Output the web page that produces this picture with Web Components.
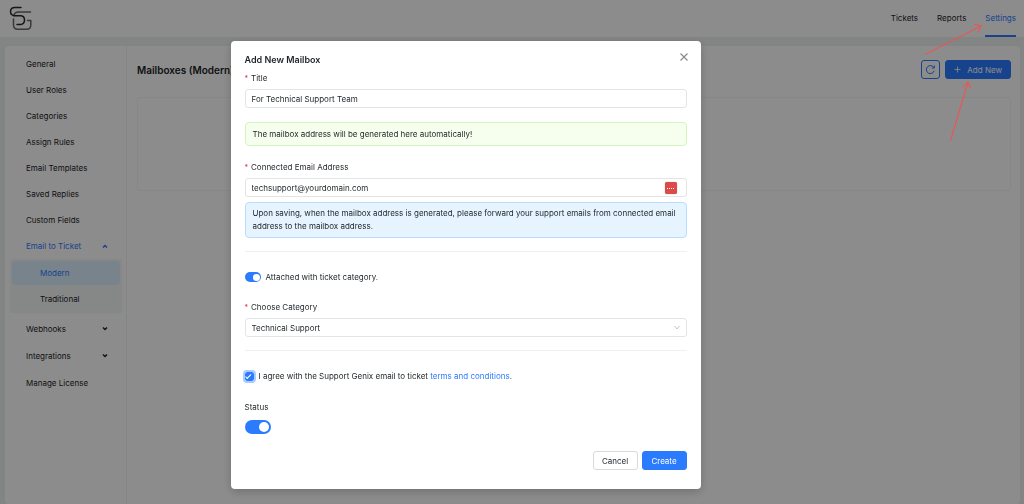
<!DOCTYPE html>
<html lang="en">
<head>
<meta charset="utf-8">
<meta name="viewport" content="width=device-width, initial-scale=1">
<title>Mailboxes</title>
<style>
html, body { margin: 0; min-height: 100%; }
body {
  --blue: #2b7bff;
  --ink: #1d2327;
  --line: #e4e4e4;
  background: #eff0f0;
  color: var(--ink);
  font: 8px/12px Inter, "Liberation Sans", sans-serif;
  overflow: hidden;
}
</style>
</head>
<body>
<sg-app></sg-app>
<script>
const define = (name, html, setup) => {
  const template = document.createElement('template');
  template.innerHTML = '<style>*{box-sizing:border-box}button,input,select{font:inherit;color:inherit;margin:0}</style>' + html;
  customElements.define(name, class extends HTMLElement {
    constructor() {
      super();
      this.attachShadow({ mode: 'open' }).append(template.content.cloneNode(true));
    }
    connectedCallback() {
      if (setup) setup(this, this.shadowRoot);
    }
  });
};

define('sg-header', `
<style>
:host { display: flex; justify-content: space-between; height: 37px; padding: 0 8px 0 9px; background: #fff; }
svg { margin-top: 5px; fill: none; stroke-linecap: round; stroke-linejoin: round; }
nav { display: flex; gap: 19px; }
a { display: flex; align-items: center; height: 37px; color: inherit; text-decoration: none; border-bottom: 2px solid transparent; }
a[aria-current] { color: var(--blue); border-color: var(--blue); }
</style>
<svg width="24" height="26" viewBox="0 0 24 26" aria-label="Support Genix" role="img">
  <path d="M21.500 7H10Q5 7 5 11M4.500 14V20Q4.500 24.300 9 24.300H17.500Q21.800 24.300 21.800 20V15.500H18.500" stroke="#686868" stroke-width="1.500"/>
  <path d="M12 2.500H6Q1.500 2.500 1.500 6.500T6 10.700H11.500Q15.500 10.700 15.500 15T11.500 19.500H8" stroke="#2b2b2b" stroke-width="1.500"/>
</svg>
<nav><a href="#tickets">Tickets</a><a href="#reports">Reports</a><a href="#settings" aria-current="page">Settings</a></nav>
`);

define('sg-nav-item', `
<style>
:host { display: block; }
a { display: flex; align-items: center; justify-content: space-between; height: 26px; padding: 0 17px 0 21px; color: inherit; text-decoration: none; }
svg { display: none; fill: none; stroke: currentColor; stroke-width: 1.500; }
:host([open]) svg, :host([closed]) svg { display: block; }
:host([open]) svg { transform: rotate(180deg); }
:host([open]) a, :host([active]) a { color: var(--blue); }
:host([child]) a { height: 24px; margin: 0 7px; padding: 0 28px; border-radius: 4px; }
:host([active]) a { background: #dcefff; }
</style>
<a href="#"><slot></slot><svg width="8" height="6" viewBox="0 0 8 6"><path d="M2 1.500L4 3.500L6 1.500"/></svg></a>
`);

define('sg-sidebar', `
<style>
:host { display: block; width: 122px; flex: none; padding-top: 5px; border-right: 1px solid #f3f3f3; }
.sub { display: grid; gap: 2px; margin: 0 0 3px 5px; padding: 2px 0; background: #f4f7f7; width: 112px; }
.sub sg-nav-item { margin: 0 -5px; }
.more { display: grid; gap: 1px; }
</style>
<nav>
<sg-nav-item>General</sg-nav-item>
<sg-nav-item>User Roles</sg-nav-item>
<sg-nav-item>Categories</sg-nav-item>
<sg-nav-item>Assign Rules</sg-nav-item>
<sg-nav-item>Email Templates</sg-nav-item>
<sg-nav-item>Saved Replies</sg-nav-item>
<sg-nav-item>Custom Fields</sg-nav-item>
<sg-nav-item open>Email to Ticket</sg-nav-item>
<div class="sub"><sg-nav-item child active>Modern</sg-nav-item><sg-nav-item child>Traditional</sg-nav-item></div>
<div class="more">
<sg-nav-item closed>Webhooks</sg-nav-item>
<sg-nav-item closed>Integrations</sg-nav-item>
<sg-nav-item>Manage License</sg-nav-item>
</div>
</nav>
`);

define('sg-button', `
<style>
:host { display: block; }
button { display: flex; align-items: center; justify-content: center; gap: 6px; height: 19px; padding: 0 8px; border: 1px solid #d9d9d9; border-radius: 3px; background: #fff; white-space: nowrap; }
:host([primary]) button { background: var(--blue); border-color: var(--blue); color: #fff; }
:host([wide]) button { min-width: 45px; }
:host([icon]) button { width: 19px; padding: 0; border-color: var(--blue); color: var(--blue); }
</style>
<button type="button"><slot></slot></button>
`, (host, root) => {
  const label = host.getAttribute('label');
  if (label) root.querySelector('button').setAttribute('aria-label', label);
});

define('sg-mailboxes', `
<style>
:host { display: block; flex: 1; padding: 14px 9px 0 10px; }
header { display: flex; align-items: center; justify-content: space-between; height: 19px; }
h1 { margin: 0; font-size: 10px; line-height: 16px; font-weight: 600; }
.actions { display: flex; gap: 5px; }
.card { height: 94px; margin-top: 18px; border: 1px solid #f5f5f5; border-radius: 4px; }
svg { fill: none; stroke: currentColor; }
</style>
<header>
  <h1>Mailboxes (Modern)</h1>
  <div class="actions">
    <sg-button icon label="Refresh"><svg width="11" height="11" viewBox="0 0 11 11"><path d="M8.800 3.500A4 4 0 1 0 9.200 6.800M9.300 1.500V4H6.800" stroke-width="1"/></svg></sg-button>
    <sg-button primary><svg width="7" height="7" viewBox="0 0 7 7"><path d="M3.500 0.500V6.500M0.500 3.500H6.500" stroke-width="0.800"/></svg>Add New</sg-button>
  </div>
</header>
<div class="card"></div>
`);

define('sg-field', `
<style>
:host { display: block; }
label { display: block; height: 12px; margin-bottom: 5px; }
:host([required]) label::before { content: "*"; font-size: 7px; color: #d9363e; margin-right: 3px; }
.box { position: relative; }
input, select { display: block; width: 100%; height: 19px; padding: 0 6px; border: 1px solid var(--line); border-radius: 3px; background: #fff; appearance: none; outline: none; }
svg { position: absolute; right: 6px; top: 7px; fill: none; stroke: #c4c4c4; pointer-events: none; }
::slotted(*) { position: absolute; right: 10px; top: 4px; }
</style>
<label for="control"></label>
<div class="box"><slot></slot></div>
`, (host, root) => {
  root.querySelector('label').textContent = host.getAttribute('label');
  const isSelect = host.hasAttribute('select');
  const control = document.createElement(isSelect ? 'select' : 'input');
  control.id = 'control';
  if (isSelect) {
    control.add(new Option(host.getAttribute('value')));
  } else {
    control.type = host.getAttribute('type') || 'text';
    control.value = host.getAttribute('value');
  }
  root.querySelector('.box').prepend(control);
  if (isSelect) control.insertAdjacentHTML('afterend', '<svg width="8" height="6" viewBox="0 0 8 6"><path d="M1.500 1L4 4L6.500 1"/></svg>');
});

define('sg-fill-badge', `
<style>
:host { display: flex; align-items: center; justify-content: center; gap: 1px; width: 12px; height: 12px; border-radius: 2px; background: #dc4a4a; box-shadow: 0 0 1px #777; }
i { width: 1px; height: 1px; background: #fff; }
</style><i></i><i></i><i></i><i></i>
`);

define('sg-alert', `
<style>
:host { display: block; padding: 5px 7px; line-height: 12px; border: 1px solid #d3f5bd; border-radius: 4px; background: #f6ffed; }
:host([info]) { line-height: 13px; padding: 4px 7px; border-color: #b9dcff; background: #e6f4ff; }
</style><slot></slot>
`);

define('sg-switch', `
<style>
:host { display: block; }
label { display: flex; align-items: center; gap: 5px; }
input { appearance: none; display: grid; align-items: center; justify-items: end; width: 16px; height: 10px; padding: 0 1px; border-radius: 7px; background: var(--blue); }
input::before { content: ""; width: 7px; height: 7px; border-radius: 50%; background: #fff; }
:host([large]) label { flex-direction: column; align-items: flex-start; gap: 7px; }
:host([large]) input { order: 1; width: 26px; height: 14px; padding: 0 2px; }
:host([large]) input::before { width: 10px; height: 10px; }
</style>
<label><input type="checkbox" role="switch" checked><span><slot></slot></span></label>
`);

define('sg-agree', `
<style>
:host { display: flex; align-items: center; gap: 5px; }
input { appearance: none; display: grid; place-items: center; width: 9px; height: 9px; background: var(--blue); border-radius: 2px; outline: 2px solid #a9cdff; }
input::before { content: ""; width: 5px; height: 2px; border: solid #fff; border-width: 0 0 1px 1px; transform: rotate(-45deg) translate(0, -1px); }
a { color: var(--blue); text-decoration: none; }
</style>
<input id="agree" type="checkbox" checked>
<label for="agree">I agree with the Support Genix email to ticket <a href="#terms">terms and conditions</a>.</label>
`);

define('sg-dialog', `
<style>
:host { position: fixed; inset: 0; display: flex; justify-content: center; align-items: flex-start; padding: 41px 93px 0 0; background: rgba(0,0,0,.45); }
section { position: relative; width: 470px; padding: 12px 14px 19px; border-radius: 4px; background: #fff; box-shadow: 0 3px 10px rgba(0,0,0,.2); }
h2 { margin: 0 0 5px; font-size: 9px; line-height: 14px; font-weight: 600; }
.close { position: absolute; top: 10px; right: 11px; display: grid; width: 12px; height: 12px; padding: 1px; border: 0; background: none; color: #888; }
.close svg { fill: none; stroke: currentColor; }
form { display: flex; flex-direction: column; }
.a { margin: 14px 0 15px; }
.b { margin-top: 5px; }
hr { width: 100%; margin: 13px 0 19px; border: 0; border-top: 1px solid #f0f0f0; }
.c { margin: 0 0 18px; }
.d { margin-top: 19px; }
footer { display: flex; justify-content: flex-end; gap: 4px; margin-top: 17px; }
</style>
<section role="dialog" aria-label="Add New Mailbox">
<button class="close" type="button" aria-label="Close"><svg width="10" height="10" viewBox="0 0 10 10"><path d="M1.500 1.500L8.500 8.500M8.500 1.500L1.500 8.500" stroke-width="1.100"/></svg></button>
<h2>Add New Mailbox</h2>
<form>
<sg-field required label="Title" value="For Technical Support Team"></sg-field>
<sg-alert class="a">The mailbox address will be generated here automatically!</sg-alert>
<sg-field required type="email" label="Connected Email Address" value="techsupport@yourdomain.com"><sg-fill-badge></sg-fill-badge></sg-field>
<sg-alert class="b" info>Upon saving, when the mailbox address is generated, please forward your support emails from connected email address to the mailbox address.</sg-alert>
<hr>
<sg-switch class="c">Attached with ticket category.</sg-switch>
<sg-field required select label="Choose Category" value="Technical Support"></sg-field>
<hr>
<sg-agree></sg-agree>
<sg-switch class="d" large>Status</sg-switch>
<footer><sg-button wide>Cancel</sg-button><sg-button wide primary>Create</sg-button></footer>
</form>
</section>
`);

define('sg-arrows', `
<style>
:host { position: absolute; top: 0; right: 0; pointer-events: none; }
svg { display: block; fill: none; stroke: #ff4a4a; stroke-width: 1; stroke-linecap: round; }
</style>
<svg width="124" height="150" viewBox="0 0 124 150" aria-hidden="true">
<path d="M26 54L81 26M74.500 24.500L81 26L78 32M50.500 140.500L68 82M63 87L68 82L70.500 88"/>
</svg>
`);

define('sg-app', `
<style>
:host { display: block; }
main { display: flex; min-height: calc(100vh - 46px); margin: 9px 4px 0 5px; border-radius: 4px; background: #fff; }
</style>
<sg-header></sg-header>
<main><sg-sidebar></sg-sidebar><sg-mailboxes></sg-mailboxes></main>
<sg-dialog></sg-dialog>
<sg-arrows></sg-arrows>
`);
</script>
</body>
</html>
